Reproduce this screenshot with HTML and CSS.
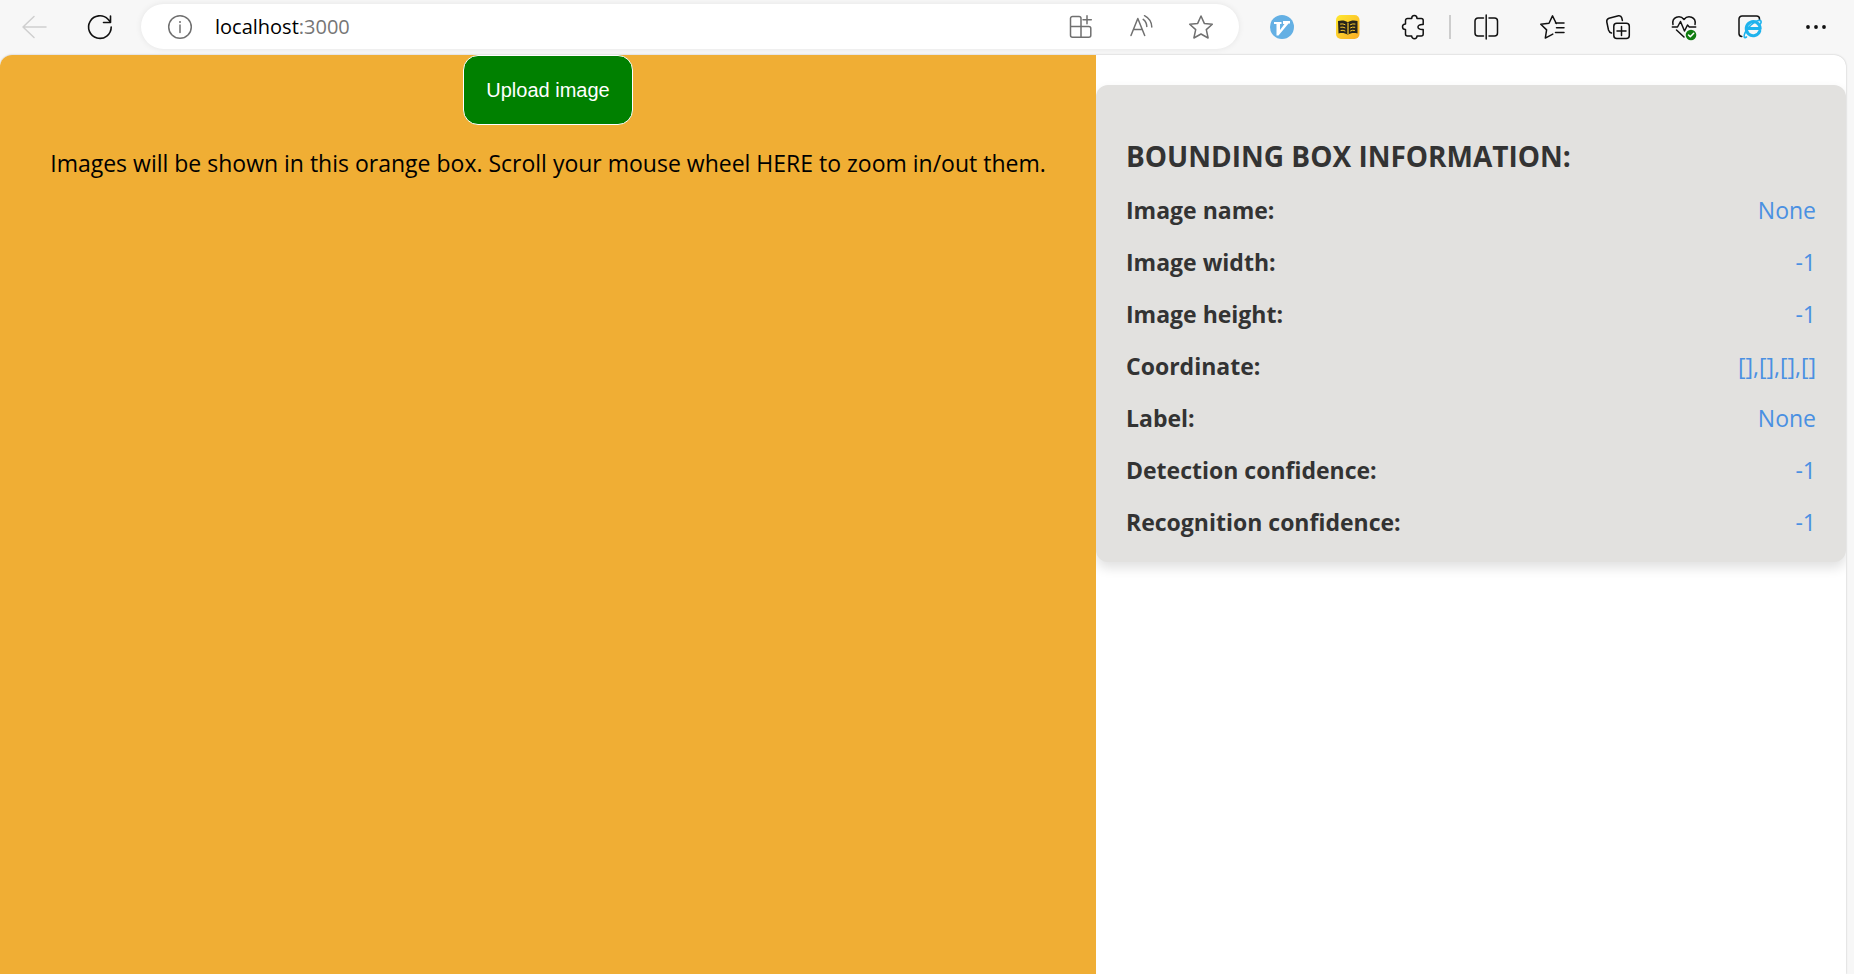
FILE: index.html
```html
<!DOCTYPE html>
<html lang="en">
<head>
<meta charset="utf-8">
<title>localhost:3000</title>
<link rel="stylesheet" href="styles.css">
</head>
<body>
<header class="toolbar">
  <button class="tool tool-disabled" aria-label="Back" disabled>
    <svg class="icon" viewBox="0 0 24 24"><path d="M12 1.500 1 12l11 10.500M1 12h23"/></svg>
  </button>
  <button class="tool" aria-label="Refresh">
    <svg class="icon" viewBox="0 0 24 24"><path d="M23.200 12A11.300 11.300 0 1 1 20 4.200l2.300 2.600M22.500 1v6.500h-7" stroke-width="1.600"/></svg>
  </button>
  <div class="address">
    <svg class="icon" viewBox="0 0 24 24"><circle cx="12" cy="12" r="11.300"/><path d="M12 10v7.500"/><circle cx="12" cy="7" r="1" class="solid"/></svg>
    <div class="url" role="textbox" aria-label="Address" contenteditable="true" spellcheck="false">localhost<span class="port">:3000</span></div>
    <button class="tool tool-small" aria-label="App available">
      <svg class="icon" viewBox="0 0 24 24"><path d="M12 11.500H1.500V3.500a2 2 0 0 1 2-2H10a2 2 0 0 1 2 2v18.800M1.500 11.500v8.800a2 2 0 0 0 2 2h16.300a2 2 0 0 0 2-2v-6.800a2 2 0 0 0-2-2H12M18 0.800v8M14 4.800h8.300"/></svg>
    </button>
    <button class="tool tool-small" aria-label="Read aloud">
      <svg class="icon" viewBox="0 0 24 24"><path d="M2 20.500 8.800 3.500l6.900 17M4.600 14.500h8.500M14.200 4.400a9 9 0 0 1 3.600 7.200M15.500.700a13.500 13.500 0 0 1 7.300 11.300"/></svg>
    </button>
    <button class="tool tool-small" aria-label="Add to favorites">
      <svg class="icon" viewBox="0 0 24 24"><path d="m12 1 3.300 7.400 8 .8-6 5.400 1.800 8.400-7.100-4-7.100 4 1.800-8.400-6-5.400 8-.8Z"/></svg>
    </button>
  </div>
  <button class="tool" aria-label="Vimium">
    <svg class="icon" viewBox="0 0 24 24"><circle cx="12" cy="12" r="12" fill="#64b0e4" stroke="none"/><path d="M4 7h7.500v2H10v6l4.500-6H13V6h7v2.500h-1.500L8.500 20.500H6.500V9H4Z" fill="#fff" stroke="none"/></svg>
  </button>
  <button class="tool" aria-label="Dictionary">
    <svg class="icon" viewBox="0 0 24 24">
      <defs><linearGradient id="gold" x1="0" y1="0" x2="1" y2="1"><stop offset="0" stop-color="#ffe92f"/><stop offset="1" stop-color="#f9ab27"/></linearGradient></defs>
      <rect width="23.500" height="24" rx="5" fill="url(#gold)" stroke="none"/>
      <path d="M2 6c4-1 7-.6 9.800 1.200C14.500 5.400 18 5 21.500 6v12.500c-3.500-.8-7-.5-9.700 1.200C9 18 6 17.700 2.500 18.500Z" fill="#28241a" stroke="none"/>
      <path d="M12 8v11" stroke="#fbc92c" stroke-width="1.200"/>
      <path d="M4.500 9q2.500-.6 4.500.6M4.700 12.200q2.500-.6 4.300.6M5 15.400q2.300-.6 4 .5M19 9q-2.500-.6-4.500.6M18.800 12.200q-2.500-.6-4.300.6M18.500 15.400q-2.300-.6-4 .5" stroke="#fbc92c" stroke-width="1"/>
    </svg>
  </button>
  <button class="tool" aria-label="Extensions">
    <svg class="icon" viewBox="0 0 24 24"><path d="M5.500 3.500h4.200c0-4 5.300-4 5.300 0h4.200a2 2 0 0 1 2 2v4c-7-.8-7 5.800 0 5v4.500a2 2 0 0 1-2 2H15c0 3.500-5.300 3.500-5.300 0H5.500a2 2 0 0 1-2-2v-4.500c-4 0-4-5.500 0-5.500V5.500a2 2 0 0 1 2-2Z"/></svg>
  </button>
  <span class="divider"></span>
  <button class="tool" aria-label="Split screen">
    <svg class="icon" viewBox="0 0 24 24"><path d="M12.200 0v24M9.500 3H4a3 3 0 0 0-3 3v12a3 3 0 0 0 3 3h5.500M15 3h5.500a3 3 0 0 1 3 3v12a3 3 0 0 1-3 3H15"/></svg>
  </button>
  <button class="tool" aria-label="Favorites">
    <svg class="icon" viewBox="0 0 24 24"><path d="M16.300 8.500 12.500.900 9 8.200l-8.200 1.100 5.800 5.600-1.300 8.200 7.500-4M15.500 8h8.500M16.500 12.700H24M15.500 17.500H24"/></svg>
  </button>
  <button class="tool" aria-label="Collections">
    <svg class="icon" viewBox="0 0 24 24"><rect x="7.800" y="8.200" width="15.500" height="15.300" rx="3"/><path d="M15.500 11.500v9M11 16h9M5.500 18C3.500 17.500 3 16.500 2.500 15L.800 7C.500 5 1.300 3.800 3 3.200L12.500.800c1.800-.300 2.800.500 3.200 2l.7 2.700"/></svg>
  </button>
  <button class="tool" aria-label="Browser essentials">
    <svg class="icon" viewBox="0 0 24 24"><path d="M1 9.500C-.5 2 8-.5 12 4.500 16-.5 24.500 2 23 9.500M.3 12h5.200L8.500 6.500l4 9.500 3-6 1.800 2h6.400M4.500 15l7.500 7"/><circle cx="19" cy="20" r="5.300" fill="#107c10" stroke="none"/><path d="m16.500 20 1.800 1.800 3.400-3.500" stroke="#fff"/></svg>
  </button>
  <button class="tool" aria-label="Internet Explorer mode">
    <svg class="icon" viewBox="0 0 24 24"><path d="M3.800 21.500A3 3 0 0 1 1 18.500V4a3 3 0 0 1 3-3h14.500a3 3 0 0 1 3 3v1"/><path d="M21.800 16a7 7 0 1 1 .4-2.500H10" stroke="#1fb3ed" stroke-width="3"/><path d="M8.500 22C4 25 6 16 13 10S25 4 22.500 9" stroke="#1fb3ed" stroke-width="1.600"/></svg>
  </button>
  <button class="tool" aria-label="Settings and more">
    <svg class="icon" viewBox="0 0 24 24"><g class="solid"><circle cx="4" cy="12" r="1.900"/><circle cx="12" cy="12" r="1.900"/><circle cx="20" cy="12" r="1.900"/></g></svg>
  </button>
</header>
<main class="page">
  <section class="viewer">
    <button class="upload">Upload image</button>
    <p class="hint">Images will be shown in this orange box. Scroll your mouse wheel HERE to zoom in/out them.</p>
  </section>
  <aside class="side">
    <section class="card">
      <h2 class="card-title">BOUNDING BOX INFORMATION:</h2>
      <dl class="facts">
        <div class="fact"><dt>Image name:</dt><dd>None</dd></div>
        <div class="fact"><dt>Image width:</dt><dd>-1</dd></div>
        <div class="fact"><dt>Image height:</dt><dd>-1</dd></div>
        <div class="fact"><dt>Coordinate:</dt><dd>[],[],[],[]</dd></div>
        <div class="fact"><dt>Label:</dt><dd>None</dd></div>
        <div class="fact"><dt>Detection confidence:</dt><dd>-1</dd></div>
        <div class="fact"><dt>Recognition confidence:</dt><dd>-1</dd></div>
      </dl>
    </section>
  </aside>
</main>
</body>
</html>
```
FILE: styles.css
```css
* { box-sizing: border-box; }

body {
  margin: 0;
  height: 100vh;
  display: flex;
  flex-direction: column;
  overflow: hidden;
  background: #f7f7f7;
  font-family: "Open Sans", "Noto Sans", sans-serif;
}

.toolbar {
  display: flex;
  align-items: center;
  padding: 4px 5px 6px 1px;
}

.tool {
  display: flex;
  flex: none;
  align-items: center;
  justify-content: center;
  width: 66px;
  height: 44px;
  padding: 0;
  border: 0;
  background: none;
  color: #111;
}

.tool-small { width: 60px; color: #707070; }
.tool-disabled { color: #cfcfcf; }

.icon {
  flex: none;
  width: 24px;
  height: 24px;
  overflow: visible;
  fill: none;
  stroke: currentColor;
  stroke-width: 1.5;
  stroke-linecap: round;
  stroke-linejoin: round;
}

.solid { fill: currentColor; stroke: none; }

.divider {
  width: 2px;
  height: 24px;
  margin: 0 2px;
  background: #cdcdcd;
}

.address {
  display: flex;
  flex: 1;
  align-items: center;
  height: 45px;
  margin: 0 10px 0 8px;
  padding: 0 8px 0 27px;
  border-radius: 23px;
  background: #fff;
  box-shadow: 0 0 6px rgba(0, 0, 0, 0.08);
  color: #707070;
}

.url {
  flex: 1;
  margin-left: 23px;
  font-size: 20px;
  line-height: 28px;
  color: #000;
  outline: none;
}

.port { color: #767676; }

.page {
  display: flex;
  flex: 1;
  margin-right: 8px;
  border-radius: 12px 12px 0 0;
  overflow: hidden;
  background: #fff;
  box-shadow: 0 0 2px rgba(0, 0, 0, 0.25);
}

.viewer {
  display: flex;
  flex: 1096;
  flex-direction: column;
  align-items: center;
  background: #f0ae34;
}

.upload {
  padding: 22px;
  border: 1px solid #fff;
  border-radius: 15px;
  background: #008000;
  color: #fff;
  font: 20px/24px "Liberation Sans", Arial, sans-serif;
}

.hint {
  margin: 22px 0 0;
  font-size: 23px;
  line-height: 32px;
  color: #000;
}

.side {
  flex: 750;
  padding-top: 30px;
  overflow: hidden;
}

.card {
  padding: 53px 30px 24px;
  border-radius: 12px;
  background: #e2e1df;
  box-shadow: 0 6px 12px rgba(0, 0, 0, 0.12);
  color: #333;
}

.card-title {
  margin: 0 0 20px;
  font-size: 28px;
  line-height: 36px;
  font-weight: 700;
}

.facts {
  display: flex;
  flex-direction: column;
  gap: 20px;
  margin: 0;
  font-size: 23px;
  line-height: 32px;
}

.fact { display: flex; justify-content: space-between; }
.fact dt { font-weight: 700; }
.fact dd { margin: 0; color: #4a90e2; }
```
